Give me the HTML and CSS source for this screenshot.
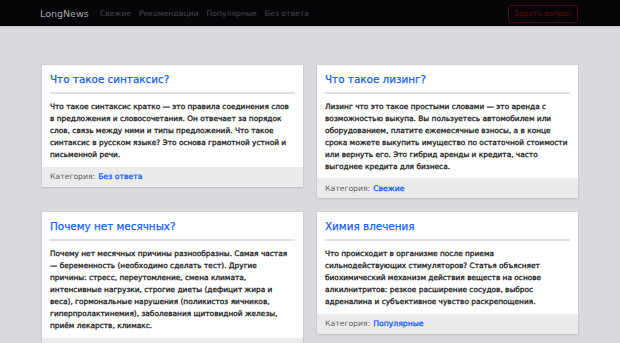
FILE: index.html
```html
<!DOCTYPE html>
<html lang="ru">
<head>
<meta charset="utf-8">
<title>LongNews</title>
<link rel="stylesheet" href="styles.css">
</head>
<body>
<header class="navbar">
  <div class="nav-inner">
    <a class="brand" href="#">LongNews</a>
    <nav class="nav-links">
      <a href="#">Свежие</a>
      <a href="#">Рекомендации</a>
      <a href="#">Популярные</a>
      <a href="#">Без ответа</a>
    </nav>
    <a class="ask-btn" href="#">Задать вопрос</a>
  </div>
</header>
<main class="container">
  <article class="card">
    <div class="card-body">
      <h2 class="card-title"><a href="#">Что такое синтаксис?</a></h2>
      <p class="card-text">Что такое синтаксис кратко — это правила соединения слов в предложения и словосочетания. Он отвечает за порядок слов, связь между ними и типы предложений. Что такое синтаксис в русском языке? Это основа грамотной устной и письменной речи.</p>
    </div>
    <div class="card-footer">Категория: <a href="#">Без ответа</a></div>
  </article>
  <article class="card">
    <div class="card-body">
      <h2 class="card-title"><a href="#">Что такое лизинг?</a></h2>
      <p class="card-text">Лизинг что это такое простыми словами — это аренда с возможностью выкупа. Вы пользуетесь автомобилем или оборудованием, платите ежемесячные взносы, а в конце срока можете выкупить имущество по остаточной стоимости или вернуть его. Это гибрид аренды и кредита, часто выгоднее кредита для бизнеса.</p>
    </div>
    <div class="card-footer">Категория: <a href="#">Свежие</a></div>
  </article>
  <article class="card">
    <div class="card-body">
      <h2 class="card-title"><a href="#">Почему нет месячных?</a></h2>
      <p class="card-text">Почему нет месячных причины разнообразны. Самая частая — беременность (необходимо сделать тест). Другие причины: стресс, переутомление, смена климата, интенсивные нагрузки, строгие диеты (дефицит жира и веса), гормональные нарушения (поликистоз яичников, гиперпролактинемия), заболевания щитовидной железы, приём лекарств, климакс.</p>
    </div>
    <div class="card-footer">Категория: <a href="#">Без ответа</a></div>
  </article>
  <article class="card">
    <div class="card-body">
      <h2 class="card-title"><a href="#">Химия влечения</a></h2>
      <p class="card-text">Что происходит в организме после приема сильнодействующих стимуляторов? Статья объясняет биохимический механизм действия веществ на основе алкилнитритов: резкое расширение сосудов, выброс адреналина и субъективное чувство раскрепощения.</p>
    </div>
    <div class="card-footer">Категория: <a href="#">Популярные</a></div>
  </article>
</main>
</body>
</html>
```

FILE: styles.css
```css
* { box-sizing: border-box; }
html, body { margin: 0; padding: 0; }
body {
  background: #d9dadd;
  font-family: "DejaVu Sans", Verdana, sans-serif;
  color: #222;
}
a { text-decoration: none; }
.navbar {
  background: #050508;
  height: 27px;
  border-bottom: 1px solid #c4c5c9;
}
.nav-inner {
  width: 540px;
  margin: 0 auto;
  height: 26px;
  display: flex;
  align-items: center;
  padding: 0 2px 0 0;
}
.brand {
  color: #a6a6aa;
  font-size: 9.5px;
  margin-right: 11px;
}
.nav-links {
  display: flex;
  gap: 8px;
  flex: 1;
  padding-top: 1px;
}
.nav-links a {
  color: #46464c;
  font-size: 7.7px;
}
.ask-btn {
  color: #5e0c14;
  border: 1px solid #4a0a12;
  border-radius: 3px;
  font-size: 7.6px;
  line-height: 10px;
  padding: 3px 5px;
  margin-top: 1px;
}
.container {
  width: 536px;
  margin: 0 auto;
  padding: 38px 0 20px;
  display: grid;
  grid-template-columns: 1fr 1fr;
  column-gap: 14px;
  row-gap: 14px;
  align-items: start;
}
.card {
  background: #fff;
  box-shadow: 0 0 0 1px rgba(0,0,0,0.03), 0 1px 2px rgba(0,0,0,0.1);
}
.card-body { padding: 8px 8px 6px; }
.card-title {
  margin: 0;
  font-size: 10.4px;
  line-height: 13px;
  font-weight: normal;
  padding: 0 0 6px;
  border-bottom: 2px solid #dfe1e7;
  -webkit-text-stroke: 0.25px currentColor;
}
.card-title a { color: #1560f5; }
.card-text {
  margin: 7px 0 0;
  font-size: 7.4px;
  line-height: 11.9px;
  color: #1c1c1c;
  -webkit-text-stroke: 0.3px currentColor;
}
.card-footer {
  background: #ebebeb;
  padding: 0 8px;
  height: 20px;
  display: flex;
  align-items: center;
  gap: 3px;
  font-size: 7.7px;
  color: #5f5f5f;
}
.card-footer a {
  color: #1560f5;
  -webkit-text-stroke: 0.3px currentColor;
}
```
